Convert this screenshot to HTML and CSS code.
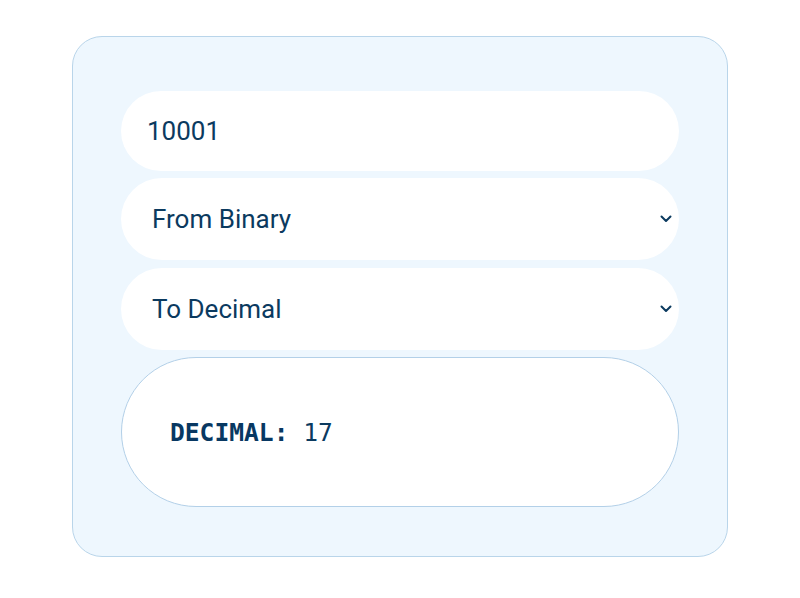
FILE: index.html
```html
<!DOCTYPE html>
<html>
<head>
<meta charset="utf-8">
<link rel="stylesheet" href="styles.css">
</head>
<body>
<div class="card">
  <div class="field input">10001</div>
  <div class="field select">
    <span class="select-text">From Binary</span>
    <svg class="chev" width="12" height="8" viewBox="0 0 12 8"><path d="M1.5 1.5 L6 6 L10.5 1.5" fill="none" stroke="#0b3a5f" stroke-width="2" stroke-linecap="round" stroke-linejoin="round"/></svg>
  </div>
  <div class="field select second">
    <span class="select-text">To Decimal</span>
    <svg class="chev" width="12" height="8" viewBox="0 0 12 8"><path d="M1.5 1.5 L6 6 L10.5 1.5" fill="none" stroke="#0b3a5f" stroke-width="2" stroke-linecap="round" stroke-linejoin="round"/></svg>
  </div>
  <div class="result"><strong class="label">DECIMAL:</strong> 17</div>
</div>
</body>
</html>
```
FILE: styles.css
```css
html, body {
  margin: 0;
  padding: 0;
  background: #ffffff;
}
body {
  padding-top: 36px;
  font-family: Roboto, "Liberation Sans", sans-serif;
  color: #0b3a5f;
}
.card {
  box-sizing: border-box;
  width: 656px;
  height: 521px;
  margin: 0 auto;
  background: #eef7fe;
  border: 1px solid #b9d5ea;
  border-radius: 30px;
  padding: 54px 48px 48px 48px;
  display: flex;
  flex-direction: column;
  gap: 7px;
}
.field {
  background: #ffffff;
  border-radius: 41px;
  display: flex;
  align-items: center;
  font-size: 26px;
  box-sizing: border-box;
}
.input {
  height: 80px;
  padding-left: 26px;
}
.select {
  height: 82px;
  padding-left: 31px;
  padding-right: 7px;
  justify-content: space-between;
}
.second {
  margin-top: 1px;
}
.chev {
  display: block;
}
.result {
  box-sizing: border-box;
  height: 150px;
  background: #ffffff;
  border: 1px solid #b3d0e8;
  border-radius: 75px;
  display: flex;
  align-items: center;
  padding-left: 48px;
  font-family: "DejaVu Sans Mono", "Liberation Mono", monospace;
  font-size: 24.6px;
  white-space: pre;
  color: #0b3a5f;
}
.label {
  font-weight: bold;
  color: #083862;
}
```
